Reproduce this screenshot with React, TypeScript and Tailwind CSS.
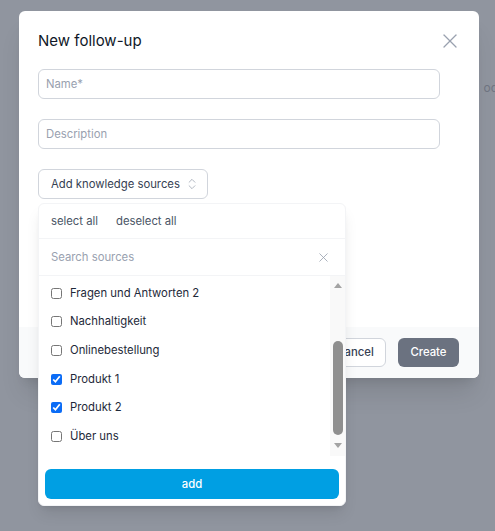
import React from "react";
import { X, ChevronsUpDown } from "lucide-react";

// Knowledge sources shown in the (scrolled) list
const sources = [
  { name: "Fragen und Antworten 2", checked: false },
  { name: "Nachhaltigkeit", checked: false },
  { name: "Onlinebestellung", checked: false },
  { name: "Produkt 1", checked: true },
  { name: "Produkt 2", checked: true },
  { name: "Über uns", checked: false },
];

const FakeScrollbar = () => (
  <div className="flex w-[15px] flex-col items-center bg-[#f9f9f9]">
    <div className="flex h-[18px] items-center justify-center">
      <svg width="8" height="5" viewBox="0 0 8 5">
        <path d="M0 5 L4 0 L8 5 Z" fill="#a3a3a3" />
      </svg>
    </div>
    <div className="mt-[47px] h-[94px] w-[10px] rounded-full bg-[#8f8f8f]" />
    <div className="flex flex-1 items-center justify-center">
      <svg width="8" height="5" viewBox="0 0 8 5">
        <path d="M0 0 L8 0 L4 5 Z" fill="#a3a3a3" />
      </svg>
    </div>
  </div>
);

const SourcesDropdown = () => (
  <div className="absolute left-0 top-[34px] z-10 w-[308px] overflow-hidden rounded-md border border-gray-100 bg-white shadow-lg">
    <div className="flex h-[35px] items-center gap-[18px] border-b border-gray-100 px-3 text-[11.3px] text-gray-600">
      <span>select all</span>
      <span>deselect all</span>
    </div>
    <div className="flex h-[37px] items-center justify-between border-b border-gray-100 pl-3 pr-[14px] text-[11.3px]">
      <span className="text-gray-400">Search sources</span>
      <X size={15} strokeWidth={1.3} className="text-gray-400" />
    </div>
    <div className="flex h-[180px]">
      <div className="flex-1 pt-[3px]">
        {sources.map((source) => (
          <label
            key={source.name}
            className="flex h-[28.6px] items-center gap-[8px] pl-[12px] text-[11.3px] text-gray-800"
          >
            <input
              type="checkbox"
              defaultChecked={source.checked}
              className="m-0 h-[11px] w-[11px] accent-[#0b6cf6]"
            />
            <span>{source.name}</span>
          </label>
        ))}
      </div>
      <FakeScrollbar />
    </div>
    <div className="px-[6px] pb-[6px] pt-[13px]">
      <button className="h-[30px] w-full rounded-md bg-[#009fe3] text-[11.3px] font-medium text-white">
        add
      </button>
    </div>
  </div>
);

export default function App() {
  return (
    <div className="relative h-[531px] w-full overflow-hidden bg-[#90959f] font-['Inter',sans-serif]">
      {/* page content behind the overlay */}
      <div className="flex justify-end pt-[80px]">
        <span className="-mr-[3px] text-xs text-[#707683]">od</span>
      </div>

      <div className="absolute left-[19px] top-[11px] w-[460px] overflow-visible rounded-md bg-white shadow-xl">
        <div className="pb-[128px] pl-[19px] pr-[39px] pt-[18px]">
          <div className="relative flex items-center justify-between">
            <h2 className="text-[15px] font-normal leading-6 text-gray-900">
              New follow-up
            </h2>
            <X
              size={24}
              strokeWidth={1.3}
              className="absolute -right-[22px] top-0 text-gray-400"
            />
          </div>

          <input
            placeholder="Name*"
            className="mt-[16px] block h-[30px] w-full rounded-md border border-gray-300 px-[7px] text-[11.3px] placeholder:text-gray-400"
          />
          <input
            placeholder="Description"
            className="mt-[20px] block h-[30px] w-full rounded-md border border-gray-300 px-[7px] text-[11.3px] placeholder:text-gray-400"
          />

          <div className="relative mt-[20px]">
            <button className="flex h-[30px] items-center gap-[5px] rounded-md border border-gray-300 bg-white pl-[12px] pr-[8px] text-[11.3px] text-gray-700">
              Add knowledge sources
              <ChevronsUpDown size={14} strokeWidth={1.3} className="text-gray-400" />
            </button>
            <SourcesDropdown />
          </div>
        </div>

        <div className="flex h-[51px] items-center justify-end gap-[12px] rounded-b-md bg-gray-50 px-[20px]">
          <button className="h-[29px] w-[62px] rounded-md border border-gray-300 bg-white text-[11.3px] font-medium text-gray-700">
            Cancel
          </button>
          <button className="h-[29px] w-[61px] rounded-md bg-[#6b7280] text-[11.3px] font-medium text-white">
            Create
          </button>
        </div>
      </div>
    </div>
  );
}
